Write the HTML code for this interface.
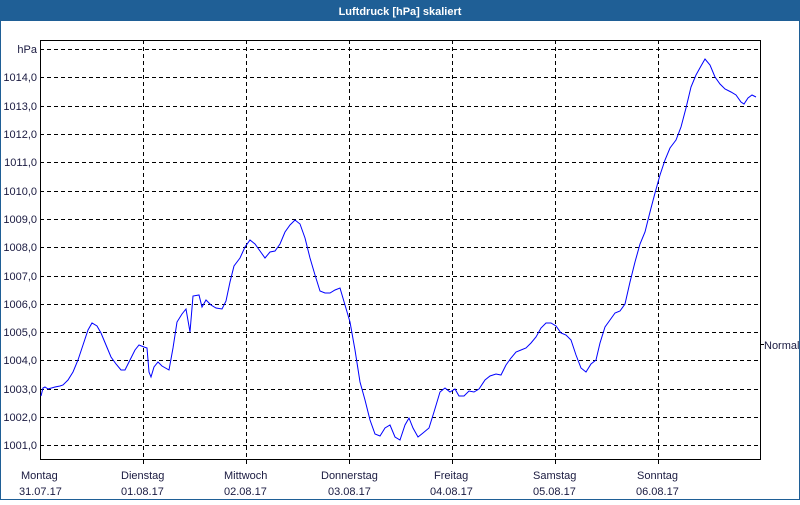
<!DOCTYPE html>
<html><head><meta charset="utf-8"><style>
body{margin:0;width:800px;height:500px;overflow:hidden;background:#fff;font-family:"Liberation Sans",sans-serif;}
</style></head><body>
<svg width="800" height="500" xmlns="http://www.w3.org/2000/svg" font-family="Liberation Sans, sans-serif" font-size="11" fill="#1a1a40">
<rect x="0.5" y="0.5" width="799" height="499" fill="#fff" stroke="#1f5f96"/>
<rect x="0" y="0" width="800" height="21" fill="#1f5f96"/>
<text x="400" y="15" text-anchor="middle" fill="#fff" font-weight="bold" font-size="11">Luftdruck [hPa] skaliert</text>
<g stroke="#000" stroke-dasharray="4,3" stroke-width="1">
<line x1="40" x2="760" y1="49.5" y2="49.5"/>
<line x1="40" x2="760" y1="77.5" y2="77.5"/>
<line x1="40" x2="760" y1="106.5" y2="106.5"/>
<line x1="40" x2="760" y1="134.5" y2="134.5"/>
<line x1="40" x2="760" y1="162.5" y2="162.5"/>
<line x1="40" x2="760" y1="191.5" y2="191.5"/>
<line x1="40" x2="760" y1="219.5" y2="219.5"/>
<line x1="40" x2="760" y1="247.5" y2="247.5"/>
<line x1="40" x2="760" y1="276.5" y2="276.5"/>
<line x1="40" x2="760" y1="304.5" y2="304.5"/>
<line x1="40" x2="760" y1="332.5" y2="332.5"/>
<line x1="40" x2="760" y1="360.5" y2="360.5"/>
<line x1="40" x2="760" y1="389.5" y2="389.5"/>
<line x1="40" x2="760" y1="417.5" y2="417.5"/>
<line x1="40" x2="760" y1="445.5" y2="445.5"/>
<line x1="143.5" x2="143.5" y1="40" y2="466"/>
<line x1="246.5" x2="246.5" y1="40" y2="466"/>
<line x1="349.5" x2="349.5" y1="40" y2="466"/>
<line x1="452.5" x2="452.5" y1="40" y2="466"/>
<line x1="555.5" x2="555.5" y1="40" y2="466"/>
<line x1="658.5" x2="658.5" y1="40" y2="466"/>
</g>
<rect x="40.5" y="40.5" width="720" height="419" fill="none" stroke="#000"/>
<line x1="760" x2="764" y1="344.5" y2="344.5" stroke="#000"/>
<g text-anchor="end">
<text x="37" y="53">hPa</text>
<text x="37" y="81">1014,0</text>
<text x="37" y="110">1013,0</text>
<text x="37" y="138">1012,0</text>
<text x="37" y="166">1011,0</text>
<text x="37" y="195">1010,0</text>
<text x="37" y="223">1009,0</text>
<text x="37" y="251">1008,0</text>
<text x="37" y="280">1007,0</text>
<text x="37" y="308">1006,0</text>
<text x="37" y="336">1005,0</text>
<text x="37" y="364">1004,0</text>
<text x="37" y="393">1003,0</text>
<text x="37" y="421">1002,0</text>
<text x="37" y="449">1001,0</text>
</g>
<text x="764" y="349">Normal</text>
<g>
<text x="21" y="479">Montag</text><text x="19" y="495">31.07.17</text>
<text x="121" y="479">Dienstag</text><text x="121" y="495">01.08.17</text>
<text x="224" y="479">Mittwoch</text><text x="224" y="495">02.08.17</text>
<text x="321" y="479">Donnerstag</text><text x="328" y="495">03.08.17</text>
<text x="434" y="479">Freitag</text><text x="430" y="495">04.08.17</text>
<text x="533" y="479">Samstag</text><text x="533" y="495">05.08.17</text>
<text x="637" y="479">Sonntag</text><text x="636" y="495">06.08.17</text>
</g>
<polyline fill="none" stroke="#0000ff" stroke-width="1" points="41,396 43,388 45,387 48,389 55,387 60,386 63,385 68,380 73,372 78,360 83,345 88,330 92,323 97,326 101,333 106,345 111,357 116,364 121,370 125,370 130,360 135,350 139,345 144,347 147,348 149,372 151,377 154,367 158,362 162,366 169,370 173,348 177,322 182,314 186,309 190,332 193,296 199,295 202,307 206,300 211,305 216,308 222,309 226,301 230,282 234,266 240,258 245,247 250,240 255,244 260,251 265,258 270,252 275,251 280,244 285,232 290,225 295,220 300,224 305,238 310,258 315,275 320,291 325,293 330,293 335,290 340,288 345,305 350,322 355,350 360,382 365,400 370,420 375,434 380,436 385,428 390,425 395,437 400,440 405,425 409,418 413,428 418,437 423,433 429,428 434,412 440,392 445,388 450,392 455,389 459,396 464,396 469,391 474,392 479,389 485,380 490,376 496,374 501,375 506,365 511,358 516,352 521,350 526,348 531,343 536,337 541,328 546,323 551,323 556,326 561,333 566,335 571,340 576,355 581,368 586,372 591,364 596,360 600,343 605,327 610,320 615,313 620,311 625,304 630,282 635,262 640,244 645,232 650,212 655,193 660,175 665,160 670,148 676,140 681,127 686,108 691,87 696,75 701,66 705,59 710,65 715,77 720,84 725,89 731,92 736,95 741,102 744,104 748,98 752,95 756,97"/>
</svg>
</body></html>
